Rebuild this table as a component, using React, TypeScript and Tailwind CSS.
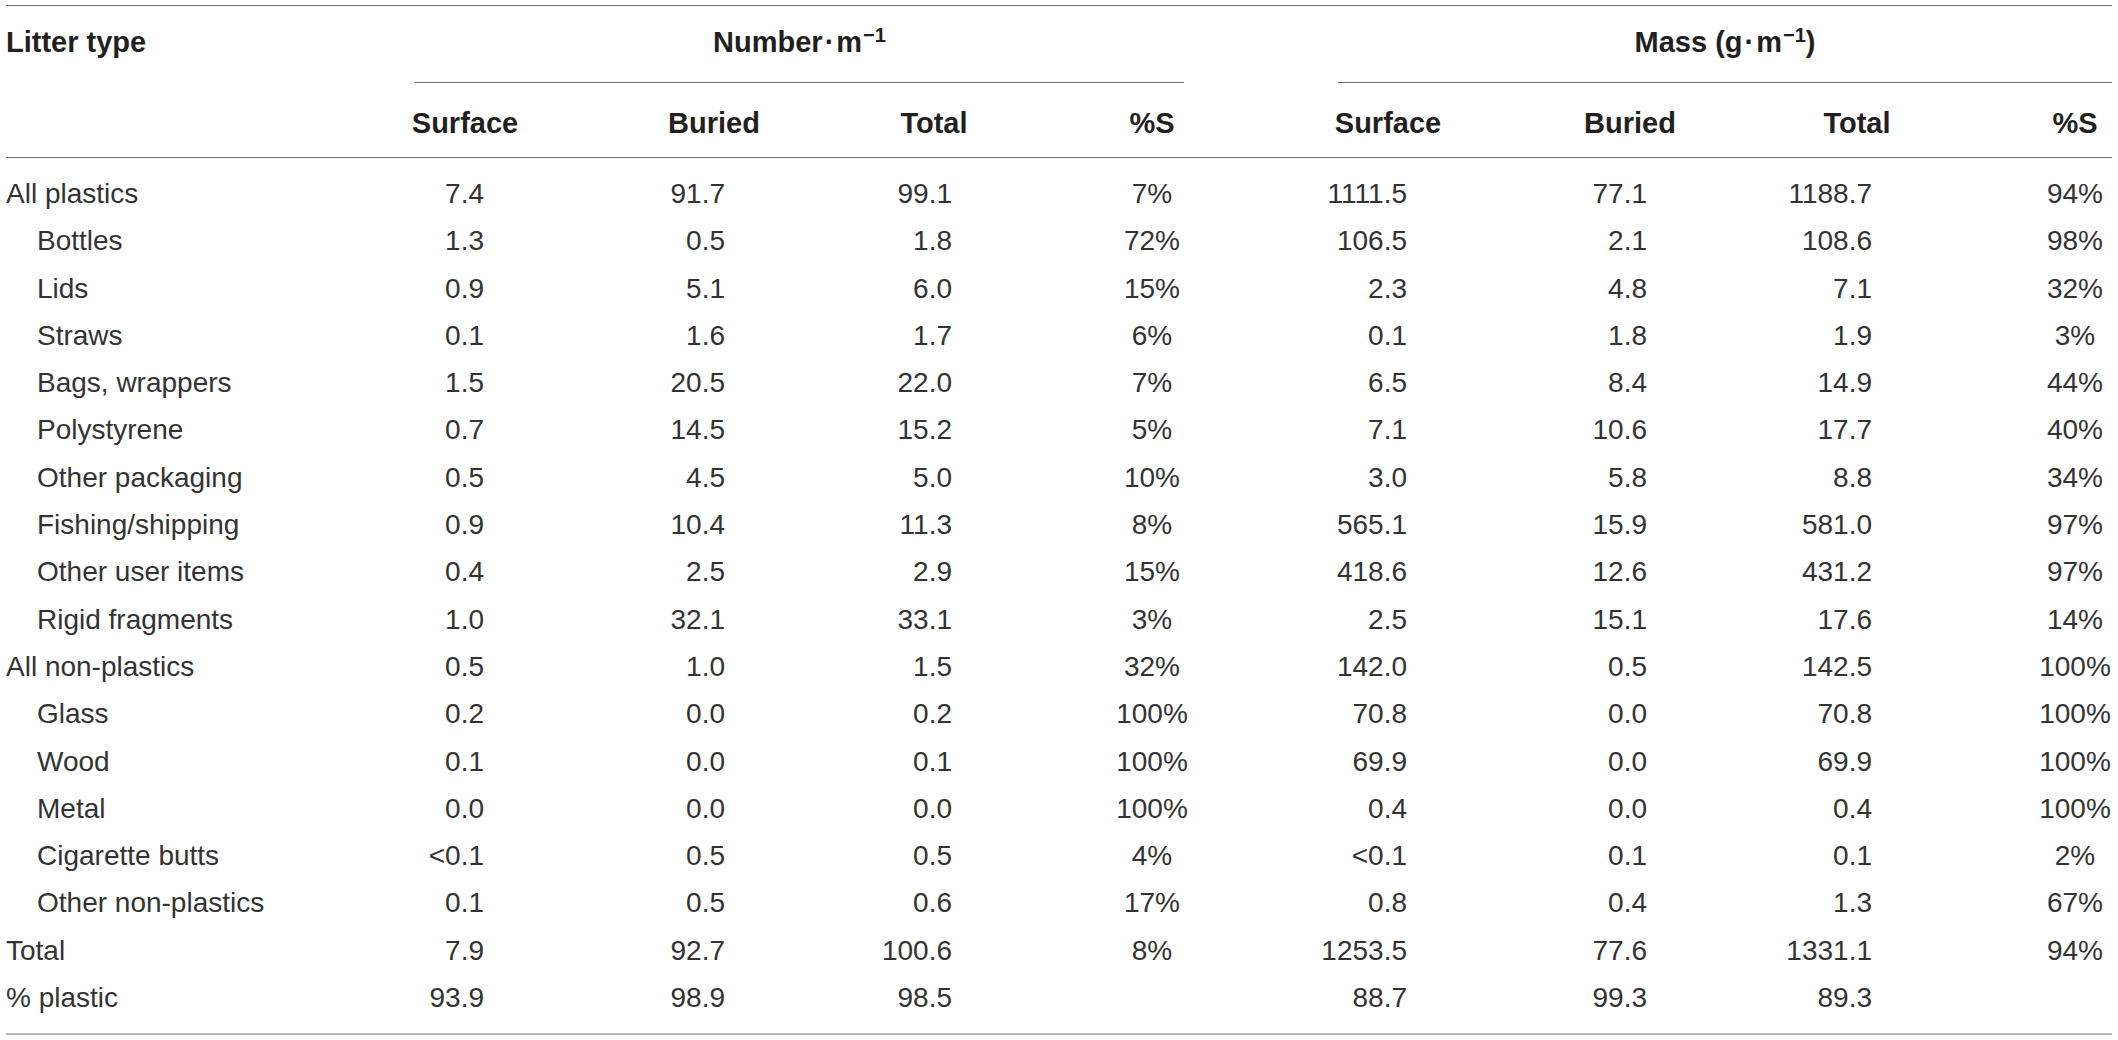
import React from 'react'

interface LitterRow {
  label: string
  indent?: boolean
  values: string[]
}

const rows: LitterRow[] = [
  { label: 'All plastics', values: ['7.4', '91.7', '99.1', '7%', '1111.5', '77.1', '1188.7', '94%'] },
  { label: 'Bottles', indent: true, values: ['1.3', '0.5', '1.8', '72%', '106.5', '2.1', '108.6', '98%'] },
  { label: 'Lids', indent: true, values: ['0.9', '5.1', '6.0', '15%', '2.3', '4.8', '7.1', '32%'] },
  { label: 'Straws', indent: true, values: ['0.1', '1.6', '1.7', '6%', '0.1', '1.8', '1.9', '3%'] },
  { label: 'Bags, wrappers', indent: true, values: ['1.5', '20.5', '22.0', '7%', '6.5', '8.4', '14.9', '44%'] },
  { label: 'Polystyrene', indent: true, values: ['0.7', '14.5', '15.2', '5%', '7.1', '10.6', '17.7', '40%'] },
  { label: 'Other packaging', indent: true, values: ['0.5', '4.5', '5.0', '10%', '3.0', '5.8', '8.8', '34%'] },
  { label: 'Fishing/shipping', indent: true, values: ['0.9', '10.4', '11.3', '8%', '565.1', '15.9', '581.0', '97%'] },
  { label: 'Other user items', indent: true, values: ['0.4', '2.5', '2.9', '15%', '418.6', '12.6', '431.2', '97%'] },
  { label: 'Rigid fragments', indent: true, values: ['1.0', '32.1', '33.1', '3%', '2.5', '15.1', '17.6', '14%'] },
  { label: 'All non-plastics', values: ['0.5', '1.0', '1.5', '32%', '142.0', '0.5', '142.5', '100%'] },
  { label: 'Glass', indent: true, values: ['0.2', '0.0', '0.2', '100%', '70.8', '0.0', '70.8', '100%'] },
  { label: 'Wood', indent: true, values: ['0.1', '0.0', '0.1', '100%', '69.9', '0.0', '69.9', '100%'] },
  { label: 'Metal', indent: true, values: ['0.0', '0.0', '0.0', '100%', '0.4', '0.0', '0.4', '100%'] },
  { label: 'Cigarette butts', indent: true, values: ['<0.1', '0.5', '0.5', '4%', '<0.1', '0.1', '0.1', '2%'] },
  { label: 'Other non-plastics', indent: true, values: ['0.1', '0.5', '0.6', '17%', '0.8', '0.4', '1.3', '67%'] },
  { label: 'Total', values: ['7.9', '92.7', '100.6', '8%', '1253.5', '77.6', '1331.1', '94%'] },
  { label: '% plastic', values: ['93.9', '98.9', '98.5', '', '88.7', '99.3', '89.3', ''] },
]

// one class per value column: right-aligned numbers, centred %S
const cellClass = [
  'text-right pr-[106px]',
  'text-right pr-[113px]',
  'text-right pr-[78px]',
  'text-center',
  'text-right pr-[95px]',
  'text-right pr-[111px]',
  'text-right pr-[84px]',
  'text-center pl-[82px]',
]

const subHeads = ['Surface', 'Buried', 'Total', '%S', 'Surface', 'Buried', 'Total', '%S']

const grid = 'grid grid-cols-[334px_250px_248px_192px_244px_228px_256px_198px_156px]'

export default function App() {
  return (
    <div className="min-h-screen w-full bg-white pt-[5px] pl-[6px] font-['Liberation_Sans',Arial,sans-serif] text-[#231f20]">
      <div className="w-[2106px] border-t border-[#6d6d6d]">

        {/* Group headers */}
        <div className={`${grid} h-[77px] text-[29px] font-bold leading-[32px]`}>
          <div className="pt-[20px]">Litter type</div>
          <div className="col-span-4 ml-[75px] mr-[90px] pt-[20px] border-b border-[#6d6d6d] text-center">
            Number<span className="px-[2px]">·</span>m<sup className="text-[20px] -top-[10px] ml-[1px]">−1</sup>
          </div>
          <div className="col-span-4 ml-[64px] pt-[20px] border-b border-[#6d6d6d] text-center">
            Mass (g<span className="px-[2px]">·</span>m<sup className="text-[20px] -top-[10px] ml-[1px]">−1</sup>)
          </div>
        </div>

        {/* Column headers */}
        <div className={`${grid} h-[75px] border-b border-[#6d6d6d] text-[29px] font-bold leading-[32px]`}>
          <div />
          {subHeads.map((h, i) => (
            <div key={i} className={`pt-[24px] ${i === 7 ? 'pl-[82px] text-center' : 'text-center'}`}>{h}</div>
          ))}
        </div>

        {/* Body */}
        <div className="pt-[12px] pb-[12px] border-b-2 border-[#b9b9b9] text-[28px] leading-[47.3px] text-[#333]">
          {rows.map(row => (
            <div key={row.label} className={grid}>
              <div className={row.indent ? 'pl-[31px]' : ''}>{row.label}</div>
              {row.values.map((v, i) => (
                <div key={i} className={cellClass[i]}>{v}</div>
              ))}
            </div>
          ))}
        </div>

      </div>
    </div>
  )
}
